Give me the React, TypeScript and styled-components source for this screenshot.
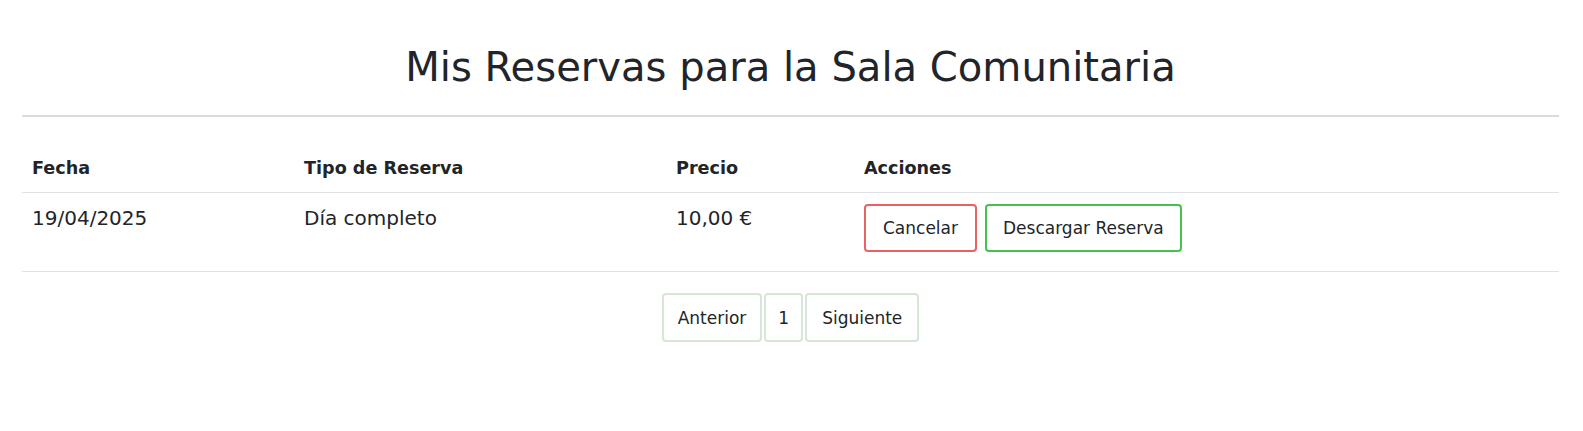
import React from "react";
import styled, { createGlobalStyle } from "styled-components";

const Global = createGlobalStyle`
  html, body { margin: 0; padding: 0; background: #fff; }
  body { font-family: "DejaVu Sans", "Noto Sans", sans-serif; color: #212529; }
  * { box-sizing: border-box; }
`;

const Page = styled.div`
  padding: 0 24px 0 22px;
`;

const Title = styled.h1`
  margin: 0;
  padding: 43px 0 24px;
  text-align: center;
  font-weight: 400;
  font-size: 40.1px;
  line-height: 48px;
  color: #212529;
`;

const Rule = styled.hr`
  margin: 0;
  border: 0;
  border-top: 2px solid #dadada;
`;

const Table = styled.table`
  width: 100%;
  margin-top: 26px;
  border-collapse: collapse;
  table-layout: fixed;
`;

const Th = styled.th<{ $w?: number }>`
  width: ${(p) => (p.$w ? `${p.$w}px` : "auto")};
  text-align: left;
  font-weight: 700;
  font-size: 17.6px;
  line-height: 26px;
  padding: 12px 10px 11px;
  border-bottom: 1px solid #dee2e6;
`;

const Td = styled.td`
  vertical-align: top;
  font-size: 20px;
  line-height: 28px;
  padding: 11px 10px 19px;
  border-bottom: 1px solid #dee2e6;
`;

const Actions = styled.div`
  display: flex;
  gap: 8px;
`;

const ActionButton = styled.button<{ $color: string; $pad: number }>`
  font-family: inherit;
  font-size: 17px;
  color: #212529;
  background: #fff;
  border: 2px solid ${(p) => p.$color};
  border-radius: 4px;
  height: 48px;
  padding: 0 ${(p) => p.$pad}px;
  cursor: pointer;
`;

const Pager = styled.nav`
  display: flex;
  justify-content: center;
  margin-top: 21px;
  gap: 2px;
`;

const PageButton = styled.button<{ $pad: number }>`
  font-family: inherit;
  font-size: 17px;
  color: #212529;
  background: #fff;
  border: 2px solid #d6e7d6;
  border-radius: 4px;
  height: 49px;
  padding: 0 ${(p) => p.$pad}px;
  cursor: pointer;
`;

export default function App() {
  return (
    <>
      <Global />
      <Page>
        <Title>Mis Reservas para la Sala Comunitaria</Title>
        <Rule />
        <Table>
          <thead>
            <tr>
              <Th $w={272}>Fecha</Th>
              <Th $w={372}>Tipo de Reserva</Th>
              <Th $w={188}>Precio</Th>
              <Th>Acciones</Th>
            </tr>
          </thead>
          <tbody>
            <tr>
              <Td>19/04/2025</Td>
              <Td>Día completo</Td>
              <Td>10,00 €</Td>
              <Td>
                <Actions>
                  <ActionButton $color="#ea6262" $pad={17}>Cancelar</ActionButton>
                  <ActionButton $color="#46c04e" $pad={16}>Descargar Reserva</ActionButton>
                </Actions>
              </Td>
            </tr>
          </tbody>
        </Table>
        <Pager>
          <PageButton $pad={14}>Anterior</PageButton>
          <PageButton $pad={12}>1</PageButton>
          <PageButton $pad={15}>Siguiente</PageButton>
        </Pager>
      </Page>
    </>
  );
}
